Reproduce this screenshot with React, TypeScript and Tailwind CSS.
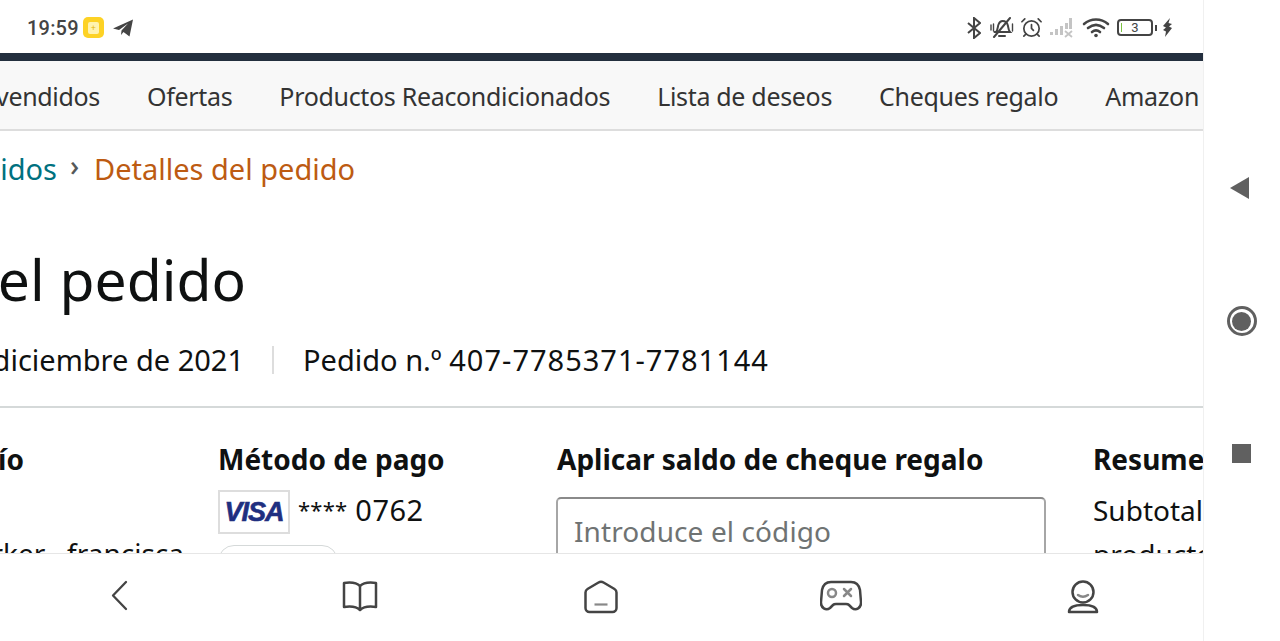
import { AlarmClock } from "lucide-react";

const navItems = ["Ofertas", "Productos Reacondicionados", "Lista de deseos", "Cheques regalo"];

const StatusBar = () => (
  <div className="h-[53px] flex items-center justify-between pl-[27px] pr-[30px] pt-[2px] bg-white">
    <div className="flex items-center">
      <span className="text-[20px] font-medium text-[#444] font-['Roboto',sans-serif] tracking-[0.2px]">19:59</span>
      <div className="ml-[4px] w-[21px] h-[21px] rounded-[5px] bg-[#fdd225] flex items-center justify-center">
        <div className="w-[11px] h-[12px] rounded-[2px] bg-[#fff3b0] flex items-center justify-center text-[9px] leading-none text-[#e5b400]">+</div>
      </div>
      <svg className="ml-[8px]" width="22" height="20" viewBox="0 0 22 20">
        <path d="M1 10.500 21 1.500 17.500 18.500 11.500 14 9 17 9.500 12.500 16 5.500 7 12Z" fill="#444" />
      </svg>
    </div>
    <div className="flex items-center text-[#444]">
      <svg width="14" height="22" viewBox="0 0 14 22" fill="none" stroke="#444" strokeWidth="2">
        <path d="M1 6l12 10-6 5V1l6 5L1 16" />
      </svg>
      <svg className="ml-[9px]" width="24" height="22" viewBox="0 0 24 22" fill="none" stroke="#444" strokeWidth="2" strokeLinecap="round">
        <path d="M6 15c2-2 1.500-5 2.500-7.500C9.500 5 11 4 12.500 4c3 0 5 2.500 5.500 5 .4 2.500.5 4.500 2 6H4.500" />
        <path d="M4 20 20 1" />
        <path d="M9 19h6" />
        <path d="M1 8v5M3.500 7v7M22.500 7v7" strokeWidth="1.400" />
      </svg>
      <AlarmClock className="w-[23px] h-[23px] ml-[6px]" strokeWidth={1.800} />
      <svg className="ml-[6px]" width="26" height="21" viewBox="0 0 26 21">
        <path d="M1 18h3v-3H1ZM6 18h3v-6H6ZM11 18h3V9h-3ZM16 12h3V6h-3ZM20 12h3V1h-3Z" fill="#c4c4c4" />
        <path d="M16 14l7 6M23 14l-7 6" stroke="#c4c4c4" strokeWidth="1.800" />
      </svg>
      <svg className="ml-[7px]" width="28" height="22" viewBox="0 0 28 22" fill="none" stroke="#444" strokeWidth="2.600" strokeLinecap="round">
        <path d="M2 7c7-6 17-6 24 0M6 11c5-4 11-4 16 0M10 15c2.500-2 5.500-2 8 0" />
        <circle cx="14" cy="18.500" r="1.800" fill="#444" stroke="none" />
      </svg>
      <div className="ml-[7px] w-[36px] h-[17px] rounded-[4px] border-2 border-[#444] flex items-center justify-center text-[13px] leading-none font-['Roboto',sans-serif] relative">
        <span className="absolute left-[2px] top-[2px] bottom-[2px] w-[1px] bg-[#7cc243]" />
        3
      </div>
      <div className="ml-[2px] w-[2px] h-[6px] bg-[#444]" />
      <svg className="ml-[5px]" width="11" height="19" viewBox="0 0 11 19">
        <path d="M8 0 1 8l3 1.500L1 12l3 1.500L3 19l7-9-3-1.500L10 6 6.500 5Z" fill="#444" />
      </svg>
    </div>
  </div>
);

const NavStrip = () => (
  <div className="h-[70px] pt-[4px] bg-[#f8f8f8] border-b-2 border-[#dddddd] flex items-center whitespace-nowrap text-[25px] tracking-[-0.32px] text-[#333] overflow-hidden">
    <div className="w-[100px] shrink-0 flex justify-end overflow-hidden">
      <span>vendidos</span>
    </div>
    {navItems.map((item) => (
      <span key={item} className="ml-[47px] shrink-0">{item}</span>
    ))}
    <span className="ml-[47px] shrink-0">Amazon Prime</span>
  </div>
);

const OrderContent = () => (
  <div className="h-[422px] overflow-hidden bg-white whitespace-nowrap text-[#0f1111]">
    <div className="h-[76px] flex items-center pb-[1px] text-[29px]">
      <div className="w-[57px] flex justify-end overflow-hidden text-[#00717f]">
        <span className="shrink-0">Pedidos</span>
      </div>
      <span className="ml-[13px] w-[24px] text-[#565959] text-[28px] font-medium -mt-[8px]">›</span>
      <span className="text-[#bd5b12]">Detalles del pedido</span>
    </div>
    <div className="mt-[32px] h-[80px] w-[246px] flex items-center justify-end overflow-hidden text-[57px] leading-none">
      <span className="shrink-0">Detalles del pedido</span>
    </div>
    <div className="h-[48px] mt-[17px] flex items-center text-[29px]">
      <div className="w-[244px] flex justify-end overflow-hidden">
        <span className="shrink-0">Pedido el 8 de diciembre de 2021</span>
      </div>
      <div className="ml-[28px] mr-[29px] w-[2px] h-[28px] bg-[#dddddd]" />
      <span>Pedido n.º <span className="tracking-[1px]">407-7785371-7781144</span></span>
    </div>
    <div className="mt-[22px] h-[2px] bg-[#d5d9d9]" />
    <div className="mt-[33px] flex text-[28px] leading-[36px]">
      <div className="w-[218px] shrink-0">
        <div className="w-[24px] flex justify-end overflow-hidden font-bold">
          <span className="shrink-0">Dirección de envío</span>
        </div>
        <div className="mt-[58px] w-[184px] flex justify-end overflow-hidden">
          <span className="shrink-0">Jim Parker<span className="ml-[7px]">, francisca</span></span>
        </div>
      </div>
      <div className="w-[339px] shrink-0">
        <div className="font-bold">Método de pago</div>
        <div className="mt-[13px] flex items-center">
          <div className="w-[72px] h-[44px] border-2 border-[#dddddd] flex items-center justify-center text-[27px] font-bold italic text-[#1f2f80] font-['Liberation_Sans',sans-serif] tracking-[-1px] [-webkit-text-stroke:0.6px_#1f2f80]">VISA</div>
          <span className="ml-[8px] -mt-[4px] flex items-center">
            <span className="text-[22px] -mt-[3px] tracking-[0.2px]">****</span>
            <span className="ml-[8px] text-[29px] tracking-[0.5px]">0762</span>
          </span>
        </div>
        <div className="mt-[11px] w-[120px] h-[40px] rounded-[16px] border border-[#d5d9d9] bg-white" />
      </div>
      <div className="w-[536px] shrink-0">
        <div className="font-bold">Aplicar saldo de cheque regalo</div>
        <div className="mt-[20px] -ml-[1px] w-[490px] h-[70px] rounded-[5px] border-2 border-[#a6a6a6] border-t-[#8a8a8a] flex items-start pl-[16px] pt-[14px] text-[#6f7373] tracking-[0.1px]">
          Introduce el código
        </div>
      </div>
      <div className="w-[110px] shrink-0 overflow-hidden">
        <div className="font-bold">Resumen del pedido</div>
        <div className="mt-[15px]">Subtotal de los</div>
        <div className="mt-[8px]">productos:</div>
      </div>
    </div>
  </div>
);

const BottomNav = () => (
  <div className="flex-1 bg-white border-t border-[#e6e6e6] flex items-start text-[#444]">
    <div className="grid grid-cols-5 w-full pt-[26px]">
      <div className="flex justify-center">
        <svg width="18" height="32" viewBox="0 0 18 32" fill="none" stroke="#444" strokeWidth="2.300" strokeLinecap="round" strokeLinejoin="round">
          <path d="M15 2 2 15.500 15 29" />
        </svg>
      </div>
      <div className="flex justify-center -ml-[2px]">
        <svg width="36" height="32" viewBox="0 0 36 32" fill="none" stroke="#444" strokeWidth="2.500" strokeLinejoin="round">
          <path d="M18 6c-3-3-9-4-16-3v24c7-1 13 0 16 3 3-3 9-4 16-3V3c-7-1-13 0-16 3ZM18 6v24" />
        </svg>
      </div>
      <div className="flex justify-center">
        <svg width="36" height="34" viewBox="0 0 36 34" fill="none" stroke="#444" strokeWidth="2.500" strokeLinejoin="round">
          <path d="M15.500 2.500a5 5 0 0 1 5 0l11 6.500a4 4 0 0 1 2 3.500V28a4 4 0 0 1-4 4H6.500a4 4 0 0 1-4-4V12.500a4 4 0 0 1 2-3.500Z" />
          <path d="M11.500 24.500h13" stroke="#888" strokeWidth="2.200" />
        </svg>
      </div>
      <div className="flex justify-center -ml-[2px]">
        <svg width="42" height="32" viewBox="0 0 42 32" fill="none" stroke="#444" strokeWidth="2.500" strokeLinejoin="round">
          <path d="M11 2h20c5 0 8 3 9 8l1 12c.5 6-5 9-9 6l-3-3c-1-1-2-1-3-1H16c-1 0-2 0-3 1l-3 3c-4 3-9.500 0-9-6l1-12c1-5 4-8 9-8Z" />
          <circle cx="12" cy="13" r="4" stroke="#888" />
          <path d="M24 9l7 7M31 9l-7 7" stroke="#888" strokeLinecap="round" />
        </svg>
      </div>
      <div className="flex justify-center">
        <svg width="32" height="34" viewBox="0 0 32 34" fill="none" stroke="#444" strokeWidth="2.500" strokeLinecap="round">
          <circle cx="16" cy="12" r="10.500" />
          <path d="M11 15c3 2 7 2 10 0" stroke="#888" />
          <path d="M2 32c0-5 6-7 14-7s14 2 14 7Z" strokeLinejoin="round" />
        </svg>
      </div>
    </div>
  </div>
);

const SideNav = () => (
  <div className="w-[77px] shrink-0 border-l border-[#f0f0f0] bg-white flex flex-col items-center pr-[1px] pt-[177px]">
    <svg className="-ml-[4px]" width="20" height="22" viewBox="0 0 20 22">
      <path d="M0 11 19 0v22Z" fill="#606060" />
    </svg>
    <div className="mt-[107px] w-[30px] h-[30px] rounded-full border-[3px] border-[#606060] flex items-center justify-center">
      <div className="w-[19px] h-[19px] rounded-full bg-[#606060]" />
    </div>
    <div className="mt-[108px] w-[19px] h-[19px] bg-[#606060]" />
  </div>
);

export default function App() {
  return (
    <div className="h-[641px] w-[1280px] flex overflow-hidden bg-white font-['Noto_Sans',sans-serif]">
      <div className="w-[1203px] shrink-0 flex flex-col overflow-hidden">
        <StatusBar />
        <div className="h-[8px] bg-[#232f3e]" />
        <NavStrip />
        <OrderContent />
        <BottomNav />
      </div>
      <SideNav />
    </div>
  );
}
